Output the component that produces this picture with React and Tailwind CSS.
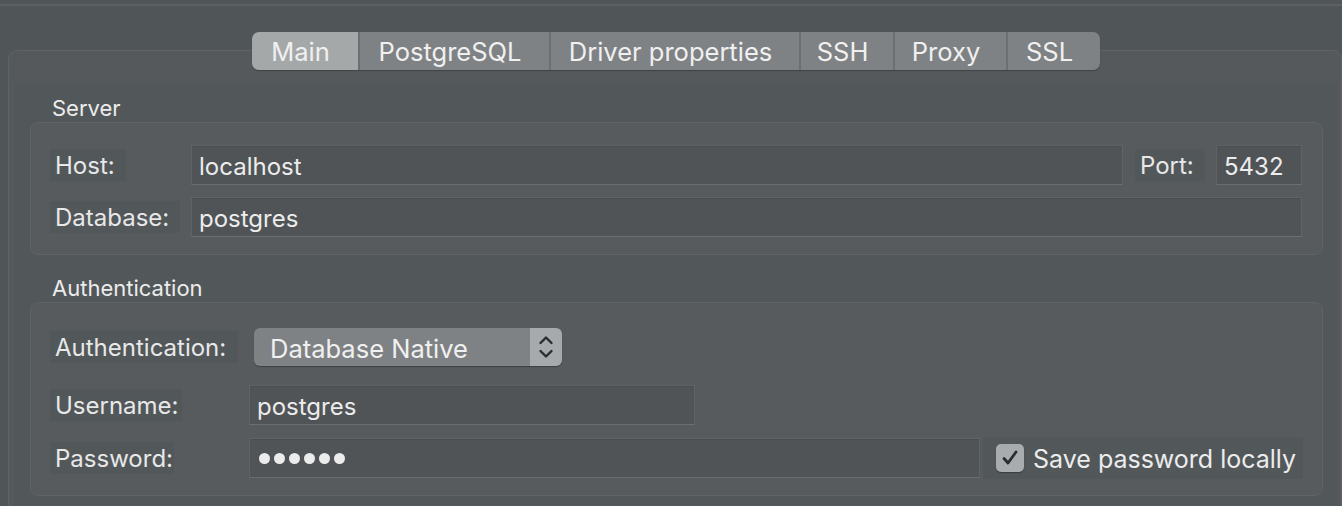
import React from "react";

const font = { fontFamily: "Inter, 'Noto Sans', sans-serif" };

function Label({ children, w }) {
  return (
    <div className={`h-[32px] flex items-center px-[5px] pt-[2px] bg-[#52575a] text-[#e8e8e8] text-[24px] leading-none ${w}`}>
      {children}
    </div>
  );
}

function Input({ children, className = "" }) {
  return (
    <div
      className={`h-[40px] flex items-center px-[7px] pt-[3px] bg-[#505457] border border-[#5f6366] border-b-[#6a6e70] shadow-[inset_0_1px_0_#4a4e51] text-[#ececec] text-[24px] leading-none ${className}`}
    >
      {children}
    </div>
  );
}

const tabs = [
  { t: "Main", w: "w-[106px]", active: true },
  { t: "PostgreSQL", w: "w-[191px]" },
  { t: "Driver properties", w: "w-[250px]" },
  { t: "SSH", w: "w-[94px]" },
  { t: "Proxy", w: "w-[113px]" },
  { t: "SSL", w: "w-[94px]" },
];

export default function App() {
  return (
    <div style={font} className="w-[1342px] h-[506px] overflow-hidden bg-[#505558] flex flex-col">
      <div className="mt-[4px] h-[2px] bg-[#5c6063]" />
      <div className="mt-[44px] ml-[8px] w-[1334px] flex-1 rounded-t-[9px] border-t border-l border-r border-[#5f6366] bg-[#55595c] flex flex-col">
        <div className="-mt-[19px] h-[38px] flex pl-[243px]">
          <div className="flex rounded-[7px] overflow-hidden shadow-[0_1px_1px_rgba(0,0,0,0.25)]">
            {tabs.map((tb, i) => (
              <div
                key={tb.t}
                className={`${tb.w} h-[38px] flex items-center justify-center pt-[1px] pr-[9px] text-[25.5px] leading-none text-[#f0f0f0] ${
                  tb.active ? "bg-[#a5a8a9]" : "bg-[#7f8284]"
                } ${i > 0 && !tb.active ? "border-l-2 border-[#6d7072]" : ""}`}
              >
                {tb.t}
              </div>
            ))}
          </div>
        </div>
        <div className="mt-[13px] ml-[5px] mr-[3px] flex-1 bg-[#52575a] flex flex-col pl-[16px] pr-[15px]">
          {/* Server */}
          <div className="pt-[12px] h-[39px] pl-[22px] text-[22px] leading-[26px] text-[#ececec]">Server</div>
          <div className="h-[133px] rounded-[8px] border border-[#5f6366] bg-[#575b5e] pt-[22px] pl-[19px] pr-[20px] flex flex-col gap-[12px]">
            <div className="flex items-center">
              <Label w="w-[76px]">Host:</Label>
              <Input className="ml-[65px] w-[932px]">localhost</Input>
              <Label w="w-[70px] ml-[12px]">Port:</Label>
              <Input className="ml-[11px] w-[86px]">5432</Input>
            </div>
            <div className="flex items-center">
              <Label w="w-[130px]">Database:</Label>
              <Input className="ml-[11px] flex-1">postgres</Input>
            </div>
          </div>
          {/* Authentication */}
          <div className="pt-[20px] h-[47px] pl-[22px] text-[22px] leading-[26px] text-[#ececec]">Authentication</div>
          <div className="h-[194px] rounded-[8px] border border-[#5f6366] bg-[#575b5e] pt-[25px] pl-[19px] pr-[19px] flex flex-col">
            <div className="flex items-center h-[38px]">
              <Label w="w-[188px]">Authentication:</Label>
              <div className="ml-[16px] w-[308px] h-[38px] rounded-[6px] overflow-hidden flex shadow-[0_1px_1px_rgba(0,0,0,0.3)]">
                <div className="flex-1 bg-[#7f8284] flex items-center pl-[16px] pt-[3px] text-[25.5px] leading-none text-[#f0f0f0]">
                  Database Native
                </div>
                <div className="w-[32px] bg-[#a7aaac] flex items-center justify-center">
                  <svg width="16" height="26" viewBox="0 0 16 26" fill="none" stroke="#2a2c2e" strokeWidth="2.4" strokeLinecap="round" strokeLinejoin="round">
                    <path d="M2.5 9 L8 3.5 L13.5 9" />
                    <path d="M2.5 17 L8 22.5 L13.5 17" />
                  </svg>
                </div>
              </div>
            </div>
            <div className="flex items-center mt-[19px]">
              <Label w="w-[132px]">Username:</Label>
              <Input className="ml-[67px] w-[446px]">postgres</Input>
            </div>
            <div className="flex items-center mt-[12px]">
              <Label w="w-[124px]">Password:</Label>
              <Input className="ml-[75px] w-[731px]">
                <div className="flex gap-[4px] ml-[2px] -mt-[2px]">
                  {[0, 1, 2, 3, 4, 5].map((i) => (
                    <span key={i} className="w-[11px] h-[11px] rounded-full bg-[#ececec]" />
                  ))}
                </div>
              </Input>
              <div className="ml-[3px] flex-1 h-[42px] bg-[#52575a] flex items-center pl-[13px]">
                <div className="w-[28px] h-[28px] rounded-[5px] bg-[#a9acae] flex items-center justify-center shadow-[0_1px_1px_rgba(0,0,0,0.3)]">
                  <svg width="20" height="20" viewBox="0 0 20 20" fill="none" stroke="#2a2c2e" strokeWidth="2.8" strokeLinecap="round" strokeLinejoin="round">
                    <path d="M4 10.5 L8 15 L16 4" />
                  </svg>
                </div>
                <span className="ml-[9px] pt-[2px] text-[25px] leading-none text-[#ececec]">Save password locally</span>
              </div>
            </div>
          </div>
        </div>
      </div>
    </div>
  );
}
